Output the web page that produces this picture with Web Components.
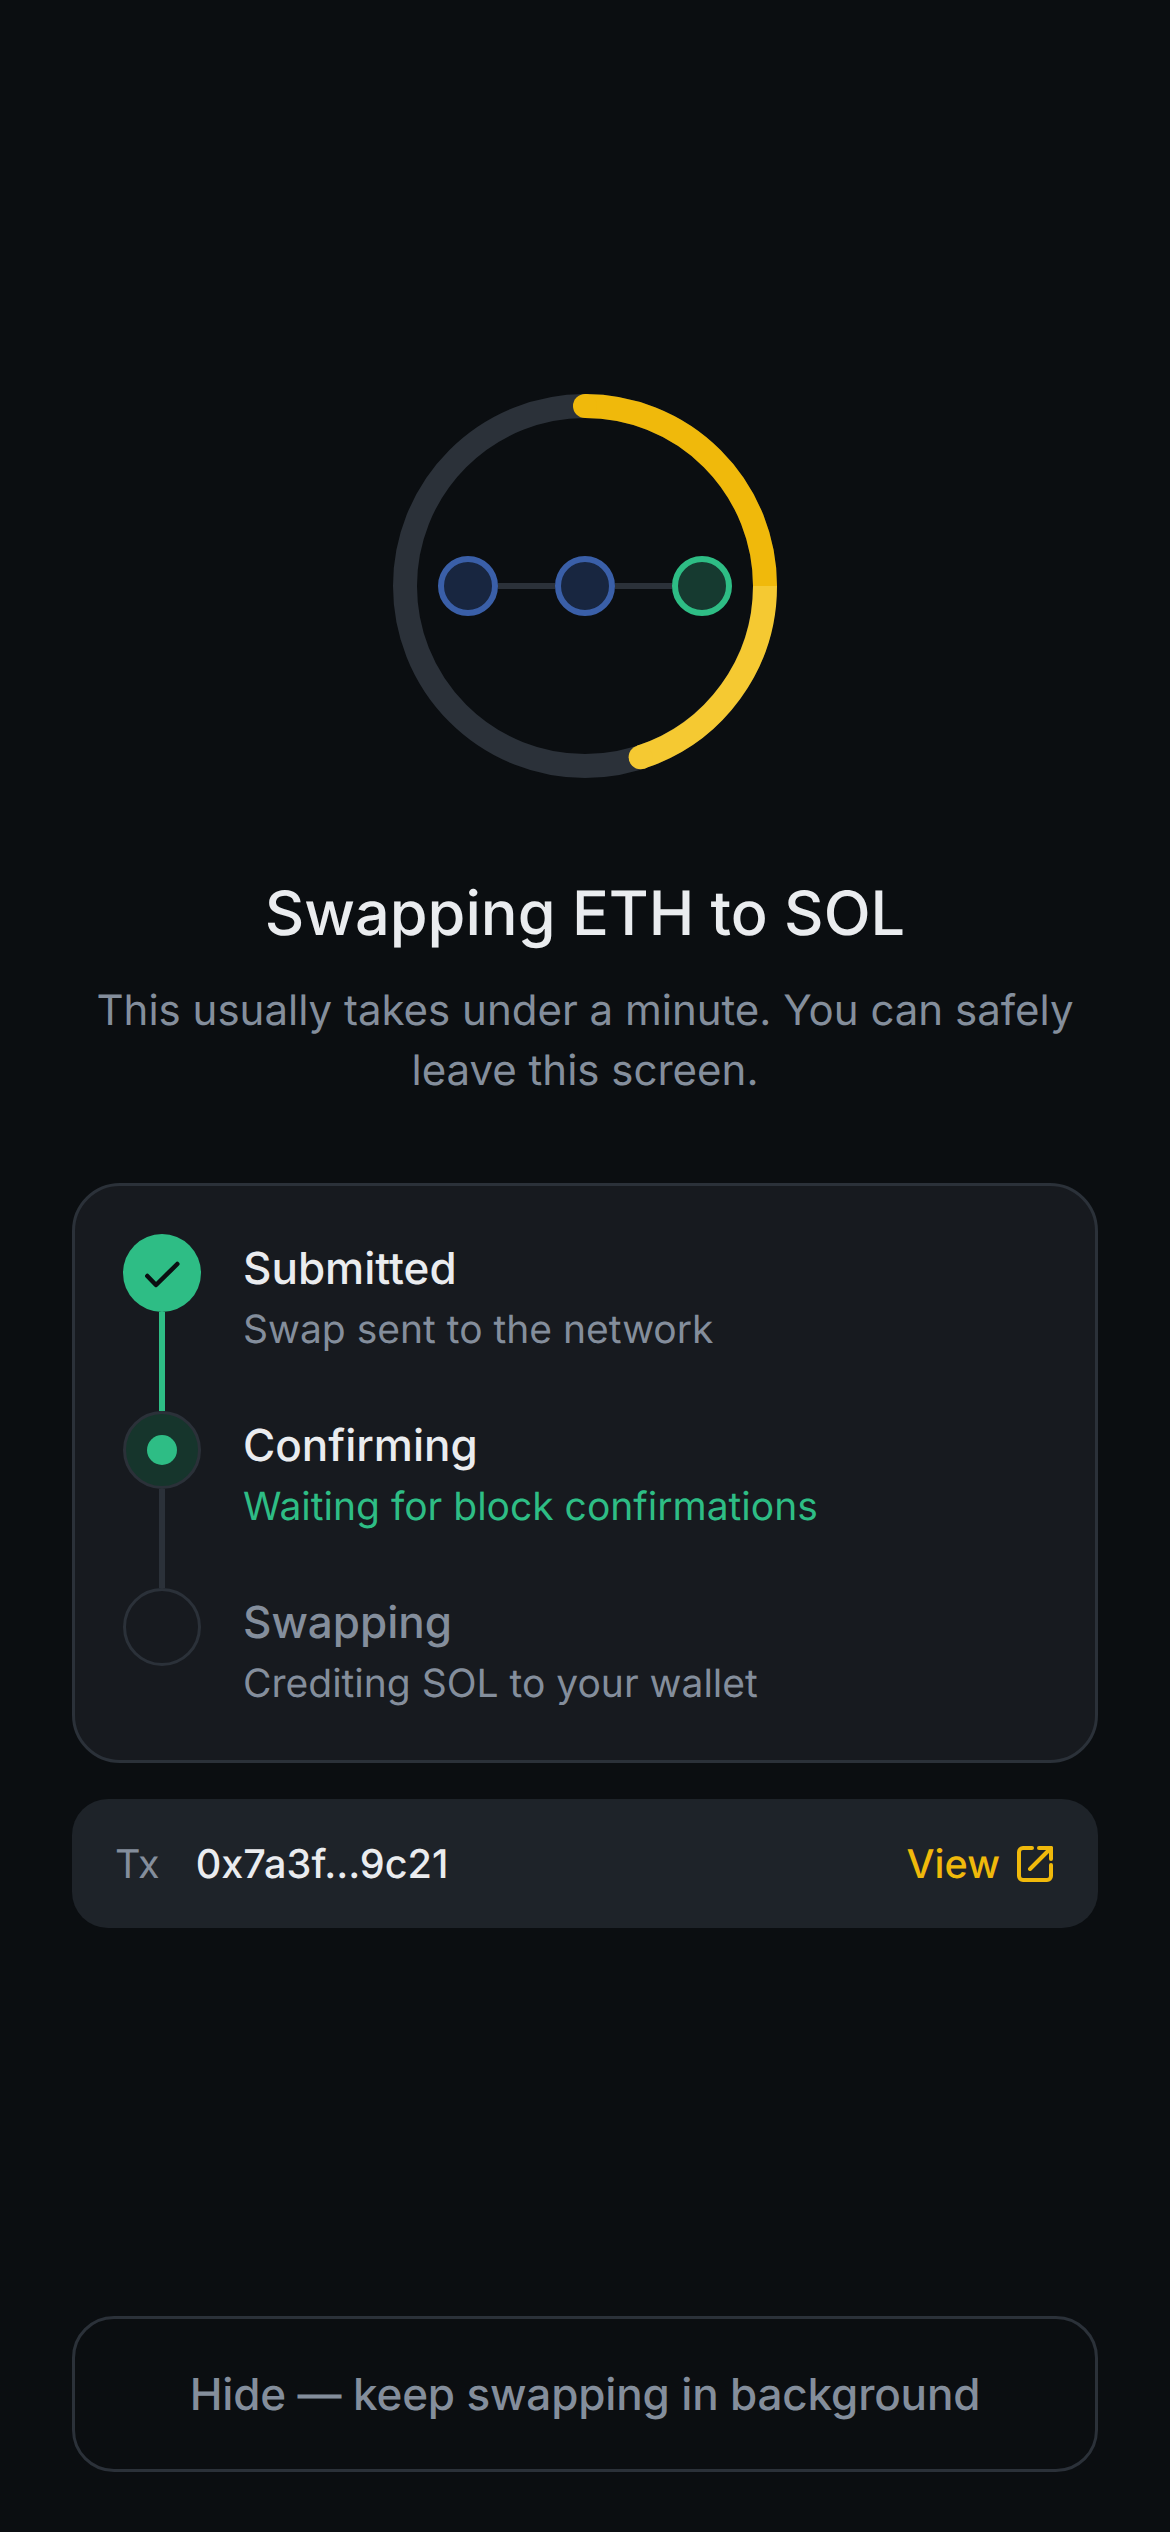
<!doctype html>
<html><head><meta charset="utf-8"><style>
html,body{margin:0;padding:0;background:#0B0E11;}
body{font-family:Inter,"Noto Sans",sans-serif;text-rendering:geometricPrecision;}
</style></head><body>
<swap-screen></swap-screen>
<script>
class ProgressRing extends HTMLElement{constructor(){super();const r=180,c=192;
const pt=a=>{const t=a*Math.PI/180;return [(c+r*Math.sin(t)).toFixed(2),(c-r*Math.cos(t)).toFixed(2)]};
const [x0,y0]=pt(0),[x1,y1]=pt(90),[x2,y2]=pt(162);
this.attachShadow({mode:'open'}).innerHTML=`<style>
:host{display:block;position:relative;width:384px;height:384px}
svg{display:block}
.route{position:absolute;inset:0;display:flex;align-items:center;justify-content:center}
.n{box-sizing:border-box;width:60px;height:60px;border-radius:50%;border:6px solid #3A5FA8;background:#182640;flex:none}
.n.g{border-color:#2EBD85;background:#163A30}
.l{width:57px;height:6px;background:#2B3139;flex:none}
</style>
<svg width="384" height="384" viewBox="0 0 384 384" fill="none" stroke-width="24">
<circle cx="192" cy="192" r="180" stroke="#2B3139"/>
<path d="M${x0} ${y0}A180 180 0 0 1 ${x1} ${y1}" stroke="#F0B90B"/>
<circle cx="${x0}" cy="${y0}" r="12" fill="#F0B90B" stroke="none"/>
<path d="M${x1} ${y1}A180 180 0 0 1 ${x2} ${y2}" stroke="#F5C932"/>
<circle cx="${x2}" cy="${y2}" r="12" fill="#F5C932" stroke="none"/>
</svg>
<div class="route"><span class="n"></span><span class="l"></span><span class="n"></span><span class="l"></span><span class="n g"></span></div>`}}
customElements.define('progress-ring',ProgressRing);

class SwapStep extends HTMLElement{constructor(){super();
this.attachShadow({mode:'open'}).innerHTML=`<style>
:host{display:flex;gap:42px;height:177px;font-family:inherit}
:host(:last-child){height:auto}
.rail{display:flex;flex-direction:column;align-items:center;width:78px;flex:none}
.c{box-sizing:border-box;width:78px;height:78px;border-radius:50%;flex:none;display:flex;align-items:center;justify-content:center;border:3px solid #2B3139}
.line{width:6px;flex:1;background:#2B3139}
:host([state=done]) .c{background:#2EBD85;border:0}
:host([state=done]) .line{background:#2EBD85}
:host([state=active]) .c{background:#16352C}
.dot{display:none;width:30px;height:30px;border-radius:50%;background:#2EBD85}
:host([state=active]) .dot{display:block}
svg{display:none}
:host([state=done]) svg{display:block}
:host(:last-child) .line{display:none}
.t{font-size:44px;line-height:60px;font-weight:550;color:#EAECEF;margin-top:4px}
:host([state=todo]) .t{color:#848E9C}
.s{font-size:39px;line-height:60px;color:#848E9C;margin-top:2px}
:host([state=active]) .s{color:#2EBD85}
</style>
<div class="rail"><div class="c"><svg width="42" height="42" viewBox="0 0 42 42" fill="none" stroke="#0B0E11" stroke-width="4.500" stroke-linecap="round" stroke-linejoin="round"><path d="M6.300 24 15 33 36.300 12"/></svg><span class="dot"></span></div><div class="line"></div></div>
<div><div class="t"><slot name="title"></slot></div><div class="s"><slot name="sub"></slot></div></div>`}}
customElements.define('swap-step',SwapStep);

class StepCard extends HTMLElement{constructor(){super();
this.attachShadow({mode:'open'}).innerHTML=`<style>
:host{display:block;box-sizing:border-box;background:#171A1F;border:3px solid #2B3139;border-radius:48px;padding:48px 48px 46px}
</style><slot></slot>`}}
customElements.define('step-card',StepCard);

class TxRow extends HTMLElement{constructor(){super();
this.attachShadow({mode:'open'}).innerHTML=`<style>
:host{display:flex;align-items:center;box-sizing:border-box;height:129px;margin-top:36px;padding:0 45px 0 43px;background:#1E2329;border-radius:36px;font-size:39.600px}
.k{color:#848E9C;margin-right:36px}
.h{color:#EAECEF;font-weight:500;flex:1}
.v{color:#F0B90B;font-weight:500;margin-right:17px}
svg{display:block}
</style><span class="k">Tx</span><span class="h">0x7a3f...9c21</span><span class="v">View</span>
<svg width="36" height="36" viewBox="0 0 36 36" fill="none" stroke="#F0B90B" stroke-width="4" stroke-linecap="round" stroke-linejoin="round"><path d="M15 2H6a4 4 0 0 0-4 4v24a4 4 0 0 0 4 4h24a4 4 0 0 0 4-4V19"/><path d="M22 2h12v11"/><path d="M13 23 34 2"/></svg>`}}
customElements.define('tx-row',TxRow);

class HideButton extends HTMLElement{constructor(){super();
this.attachShadow({mode:'open'}).innerHTML=`<style>
:host{display:flex;align-items:center;justify-content:center;box-sizing:border-box;height:156px;margin-top:auto;border:3px solid #2B3139;border-radius:42px;color:#848E9C;font-size:44px;letter-spacing:-.15px;font-weight:550}
</style><slot></slot>`}}
customElements.define('hide-button',HideButton);

class SwapScreen extends HTMLElement{constructor(){super();
this.attachShadow({mode:'open'}).innerHTML=`<style>
:host{display:flex;flex-direction:column;box-sizing:border-box;height:2532px;padding:394px 72px 60px;background:#0B0E11;font-family:Inter,"Noto Sans",sans-serif}
progress-ring{align-self:center}
h1{margin:99px 0 0;font-size:61.200px;line-height:72px;font-weight:500;color:#EAECEF;text-align:center}
p{margin:32px 0 82px;font-size:42px;line-height:60px;color:#848E9C;text-align:center}
</style>
<progress-ring></progress-ring>
<h1>Swapping ETH to SOL</h1>
<p>This usually takes under a minute. You can safely leave this screen.</p>
<step-card>
<swap-step state="done"><span slot="title">Submitted</span><span slot="sub">Swap sent to the network</span></swap-step>
<swap-step state="active"><span slot="title">Confirming</span><span slot="sub">Waiting for block confirmations</span></swap-step>
<swap-step state="todo"><span slot="title">Swapping</span><span slot="sub">Crediting SOL to your wallet</span></swap-step>
</step-card>
<tx-row></tx-row>
<hide-button>Hide — keep swapping in background</hide-button>`}}
customElements.define('swap-screen',SwapScreen);
</script></body></html>
